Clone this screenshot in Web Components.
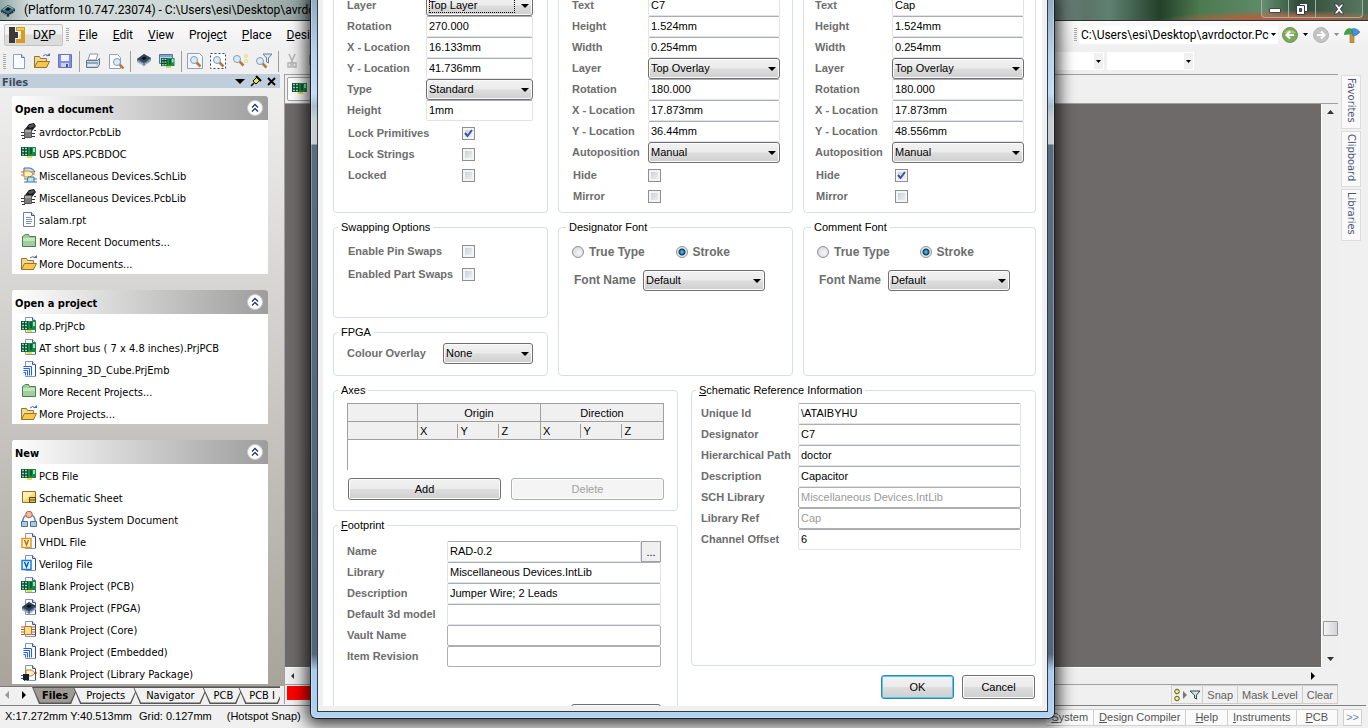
<!DOCTYPE html>
<html lang="en">
<head>
<meta charset="utf-8">
<title>DXP</title>
<style>
  body {
    margin: 0;
    background: #fff;
    overflow: hidden;
    font-family: "Liberation Sans", Arial, sans-serif;
    font-size: 11px;
    color: #000;
    --ui-font: Roboto, "Open Sans", sans-serif;
    --panel-font: "DejaVu Sans Condensed", "DejaVu Sans", sans-serif;
  }
</style>
</head>
<body>
<app-shell></app-shell>
<component-dialog></component-dialog>

<script>
const board = (x, y) => `
  <g transform="translate(${x} ${y})">
    <path d="M0 0h15v9h-4v2H6V9H0z" fill="#1a8a4c"/>
    <path d="M0 0h7v9H0z" fill="#0d4a33"/>
    <path d="M1 1.500h2M4 1.500h2M1 4.500h2M4 4.500h2M1 7.500h2M4 7.500h2" stroke="#8fe0b0" stroke-width="1.500"/>
    <path d="M9 1h2v6H9z" fill="#0d5a36"/>
    <path d="M12 1h2v4h-2z" fill="#9fe6b4"/>
    <path d="M6 9h5v2H6z" fill="#e6e03a"/>
  </g>`;
const page = '<path d="M4.500 .500h7l3 3v12h-10z" fill="#f6f9ff" stroke="#8795b5"/><path d="M11.500 .500v3h3" fill="#cdd8f0" stroke="#465a85"/><path d="M14.500 4v11" stroke="#33507a"/>';
const lens = (x, y) => `
  <g transform="translate(${x} ${y})">
    <path d="M6.500 6.500l4 4" stroke="#b5793c" stroke-width="2.5"/>
    <circle cx="4" cy="4" r="3.500" fill="#dbeaf8" stroke="#8698ae"/>
  </g>`;
const chip = (a, b) => `
  <path d="M1 8l7-5 7 4v3l-7 5-7-4z" fill="${b}"/>
  <path d="M1 8l7-5 7 4-7 5z" fill="${a}"/>
  <path d="M5 7.500l3-2 3 1.500-3 2z" fill="#111"/>
  <path d="M2 10v2M4 11v2M6 12v2M10 12v2M12 11v2M14 9v2" stroke="#d5dbe3"/>`;

const ICONS = {
  app: chip('#3b6f7c', '#1c3038') + '<path d="M3 8l5-4 5 3" stroke="#79bfc0" fill="none"/>',
  dxp: '<path d="M0 0h6v5h3v6H6v5H0z" fill="#3c3a38"/><path d="M7 0h9v16H7v-4h5V4H7z" fill="#d99b1c"/><path d="M8 1h7v2H8z" fill="#f0c868"/><path d="M7 4.500h2.500v7H7" fill="none" stroke="#fff"/>',
  pcblib: '<path d="M4 6l4-5 5-1 2 3-4 5z" fill="#1c1c1c"/><path d="M7 3l5-2 2 2-5 2z" fill="#555"/><path d="M3.500 6.500h7v8h-7z" fill="#7d7d7d" stroke="#555"/><path d="M4 7h6v2H4z" fill="#a8a8a8"/><path d="M0 9.500h3M0 12.500h3M1 15.500h3M11 13.500h3M11 10.500h3M13 7.500h2" stroke="#333"/>',
  board: board(0, 2),
  schlib: '<path d="M3 1h6q4 1 5 4h-4v2H3z" fill="#cfe0fb" stroke="#3a66c8"/><path d="M3 4h5q3 1 4 3-1 3-4 3H3z" fill="#fff3b8" stroke="#d9860c"/><path d="M0 5h3M0 8h3M12 7h2" stroke="#d2691e"/><path d="M7 10h6v5H6z" fill="#bfe8dc" stroke="#3572b8"/><path d="M3 12h3M3 15h3M13 12h3M13 15h3" stroke="#3572b8"/>',
  rpt: '<path d="M2.500 1.500h8l3 3v11h-11z" fill="#fdfdff" stroke="#6f80a5"/><path d="M10.500 1.500v3h3" fill="#c7d4ec" stroke="#46597f"/><path d="M5 6.500h5M5 8.500h6M5 10.500h6M5 12.500h5" stroke="#7f90b0"/>',
  recent: '<path d="M1.500 3.500l3-2h3l1 2h6v10h-13z" fill="#9fcf9c" stroke="#4c7d4b"/><path d="M2 5h12v3H2z" fill="#c4e4c0"/>',
  folder: '<path d="M.500 3.500h5l1 2h6v9h-12z" fill="#f4d98a" stroke="#8d7440"/><path d="M3.500 8.500h12l-3 6h-12z" fill="#f7c64c" stroke="#9a7426"/><path d="M9 3q3-3 5 0" fill="none" stroke="#4b6da0"/><path d="M12 3h4V0z" fill="#4b6da0"/>',
  prjpcb: page + board(0, 4),
  prjemb: page + '<path d="M2 5h9v10H2z" fill="#eef4ff"/><path d="M2.500 5.500h8v9M2.500 7.500h6v7M2.500 9.500h4v5M2.500 11.500h2v3" fill="none" stroke="#2f62d6"/>',
  sheet: '<path d="M1.500 2.500h13v11h-13z" fill="#ffd968" stroke="#8d7338"/><path d="M2 3h12L2 12z" fill="#fff0b0"/><path d="M8.500 8.500h6v5h-6zM9 11h5" fill="#f4c138" stroke="#4a4637"/>',
  openbus: '<path d="M5 4q-4 3-3 8M11 4q4 3 3 8" fill="none" stroke="#5b7fa8" stroke-width="1.500"/><circle cx="8" cy="3.500" r="3.300" fill="#f2b99c" stroke="#a9674a"/><path d="M.500 10.500h6v5h-6zM9.500 10.500h6v5h-6z" fill="#a9cbe4" stroke="#4d7394"/>',
  vhdl: page + '<path d="M1 5.500h9v9H1z" fill="#fff6dd" stroke="#e39a16" stroke-width="1.500"/><path d="M3.500 7l2 5 2-5" fill="none" stroke="#c8690a" stroke-width="1.500"/>',
  verilog: page + '<path d="M1 5.500h9v9H1z" fill="#e9f3ff" stroke="#167fe3" stroke-width="1.500"/><path d="M3.500 7l2 5 2-5" fill="none" stroke="#0a5dc8" stroke-width="1.500"/>',
  fpga: page + chip('#2e4257', '#5d7691'),
  core: page + '<path d="M3.500 5.500h7v8h-7z" fill="#ffe08a" stroke="#b8742a"/><path d="M0 6h3M0 8.500h3M0 11h3M0 13.500h3M11 6h3M11 8.500h3M11 11h3M11 13.500h3" stroke="#c05a1e"/>',
  libpkg: page + '<path d="M5 5h5q3 1 4 3-1 2-4 3H5z" fill="#fff0c8" stroke="#c97a14"/><path d="M13 8h3" stroke="#c22"/><path d="M2 9h6v6H2z" fill="#14202e"/><path d="M0 10.500h2M0 13.500h2M3.500 15v1M6.500 15v1" stroke="#456"/>',
  new: '<path d="M2.500 1.500h8l3 3v11h-11z" fill="#fbfcff" stroke="#92a0bd"/><path d="M10.500 1.500v3h3" fill="#d6e0f2" stroke="#5f7196"/>',
  save: '<path d="M1.500 1.500h13v13h-13z" fill="#7f8fe0" stroke="#6474c4"/><path d="M4 2h8v6H4z" fill="#eef2ff"/><path d="M4 10h8v4H4z" fill="#c9d0f2"/><path d="M9 11h2v3H9z" fill="#4454a8"/>',
  print: '<path d="M5 1h8l-2 6H3z" fill="#fff" stroke="#8b97ad"/><path d="M1.500 7.500h11l2-2v6l-2 3h-11z" fill="#c8d2e0" stroke="#66748c"/><path d="M2 10h11" stroke="#66748c"/><path d="M3 12h8" stroke="#fff"/>',
  preview: '<path d="M1.500 1.500h8l3 3v11h-11z" fill="#fbfcff" stroke="#92a0bd"/>' + lens(5, 5),
  chip: '<g transform="translate(0 -2)">' + chip('#33485f', '#6f879f') + '</g>',
  boards: '<path d="M.500 1.500h13v9h-13z" fill="#b8d3ea" stroke="#54749a"/><path d="M1 2h12v2H1z" fill="#7fa3cc"/><g transform="translate(2 5) scale(.9)">' + board(0, 0) + '</g>',
  zoomdoc: '<path d="M.500 .500h12l3 3v12h-15z" fill="#f2f6fc" stroke="#8fa0ba"/>' + lens(3, 3),
  zoomarea: '<path d="M.500 .500h15v15H.500z" fill="#fff" stroke="#33466e" stroke-dasharray="2 2"/>' + lens(3, 3),
  zoomsel: lens(0, 2) + '<g fill="#fff7a0" stroke="#d8c860" stroke-width=".6"><circle cx="13" cy="3" r="1.500"/><circle cx="13" cy="8" r="1.500"/></g>',
  zoomfilter: lens(0, 4) + '<path d="M7 1h9l-3.500 4v5l-2-1V5z" fill="#dde7f2" stroke="#66809e"/>',
  cut: '<path d="M5 1l4 9M11 1L7 10" stroke="#b4b4b4" stroke-width="1.500"/><path d="M4 10h3v4H4zM9 10h3v4H9z" fill="none" stroke="#b4b4b4" stroke-width="1.500"/>',
  copy: '<path d="M2.500 2.500h7v9h-7zM6.500 5.500h7v9h-7z" fill="#eee" stroke="#aaa"/>',
  menu: '<path d="M3 6h10l-5 5z"/>',
  pin: '<path d="M3 13l3-3" stroke="#000" stroke-width="1.500"/><path d="M5 8l4-4 3 3-4 4z" fill="#f5e642" stroke="#000"/><path d="M8 3l5 5" stroke="#000" stroke-width="2"/>',
  close: '<path d="M4 5l7 7M11 5l-7 7" stroke="#000" stroke-width="1.800"/>',
  collapse: '<circle cx="8" cy="8" r="7.500" fill="#fff" stroke="#c8c8d0"/><path d="M5 7.500l3-3 3 3M5 11.500l3-3 3 3" fill="none" stroke="#26365e" stroke-width="1.300"/>',
  back: '<circle cx="8" cy="8" r="7.500" fill="#7ea85c" stroke="#6f9155"/><path d="M2 6q6-6 12 0" fill="#aac98e"/><path d="M12 8H5M8 4.500L4.500 8 8 11.500" fill="none" stroke="#fff" stroke-width="2"/>',
  forward: '<circle cx="8" cy="8" r="7.500" fill="#c4c4c4" stroke="#b4b4b4"/><path d="M4 8h7M8 4.500L11.500 8 8 11.500" fill="none" stroke="#fff" stroke-width="2"/>',
  sign: '<path d="M6 3h4v13H6z" fill="#c9973a" stroke="#86601c" stroke-width=".5"/><path d="M0 8q0-5 5-7l4 1v5z" fill="#43a047"/><path d="M8 2q4-2 8 3-3 4-7 4z" fill="#4a8fdc" stroke="#2c61a8" stroke-width=".5"/>',
  up: '<path d="M5 10h7L8.500 6z" fill="#333"/>',
  down: '<path d="M5 6h7l-3.500 4z" fill="#333"/>',
  left: '<path d="M9 5v6L6 8z" fill="#333"/>',
  lefts: '<path d="M9 4v8L5 8z" fill="#999"/>',
  right: '<path d="M6 4v8l4-4z" fill="#000"/>',
  dots: '<g fill="#f6ef3c" stroke="#555"><circle cx="4" cy="4.500" r="2.300"/><circle cx="4" cy="11.500" r="2.300"/></g><path d="M10 4v8l4-4z" fill="#777"/>',
  funnel: '<path d="M1 4h10L7.500 8v4L5.500 11V8z" fill="#d7e6e2" stroke="#2c4a48"/>',
  min: '<path d="M2.500 7.500h11v4h-11z" fill="#fff" stroke="#3d4a48"/>',
  max: '<path d="M5.500 2.500h8v8h-8z" fill="#fff" stroke="#333f48"/><path d="M2.500 4.500h8v9h-8z" fill="#fff" stroke="#333f48"/><path d="M5.500 7.500h2v3h-2z" fill="#567" stroke="#333f48"/>',
  x: '<path d="M3 3h3l2 2.500L10 3h3l-3.500 5 3.500 5h-3l-2-2.500L6 13H3l3.500-5z" fill="#fff" stroke="#333f48"/>'
};

class AppIcon extends HTMLElement {
  connectedCallback() {
    const root = this.attachShadow({ mode: 'open' });
    root.innerHTML = `
      <style>
        :host { display: block; width: 16px; height: 16px; flex: none; }
        svg { display: block; }
      </style>
      <svg width="16" height="16" viewBox="0 0 16 16" aria-hidden="true">${ICONS[this.getAttribute('name')] || ''}</svg>
    `;
  }
}
customElements.define('app-icon', AppIcon);

class TitleBar extends HTMLElement {
  connectedCallback() {
    this.attachShadow({ mode: 'open' }).innerHTML = `
      <style>
        :host {
          display: flex;
          align-items: center;
          height: 21px;
          border-bottom: 1px solid #2b3332;
          box-sizing: border-box;
          font: 12px/20px var(--ui-font);
          white-space: nowrap;
          background:
            radial-gradient(ellipse 130px 12px at 1285px 22px, #b0603f 0, #b0603f 40%, transparent 100%),
            linear-gradient(90deg, #95a8a6 0, #d3dcda 30px, #cfd8d7 200px, #a9b5b3 260px, #8fa09e 310px, #6f8580 1050px, #5c7468 1085px, #5f8070 1110px, #24402a 1160px, #4d7a50 1200px, #5d8a68 1260px, #1f3c27 1300px, #4c6f55 1368px);
        }
        app-icon { margin: 0 8px 0 0; }
        .controls {
          display: flex;
          align-self: flex-start;
          margin: 0 5px 0 auto;
          border: 1px solid #9fb0a8;
          border-top: 0;
          border-radius: 0 0 4px 4px;
        }
        button {
          display: flex;
          justify-content: center;
          align-items: center;
          width: 27px;
          height: 17px;
          padding: 0;
          border: 0;
          border-right: 1px solid #9fb0a8;
          background: rgba(255, 255, 255, .08);
        }
        button:last-child { width: 46px; border-right: 0; }
        button app-icon { margin: 0; }
      </style>
      <app-icon name="app"></app-icon>
      <span>(Platform 10.747.23074) - C:\\Users\\esi\\Desktop\\avrdo</span>
      <div class="controls">
        <button aria-label="Minimize"><app-icon name="min"></app-icon></button>
        <button aria-label="Restore"><app-icon name="max"></app-icon></button>
        <button aria-label="Close"><app-icon name="x"></app-icon></button>
      </div>
    `;
  }
}
customElements.define('title-bar', TitleBar);

class MenuBar extends HTMLElement {
  connectedCallback() {
    this.attachShadow({ mode: 'open' }).innerHTML = `
      <style>
        :host {
          display: flex;
          align-items: center;
          height: 27px;
          padding: 0 8px 0 4px;
          background: linear-gradient(#fafafa, #f0f0f0);
          font: 12px/16px var(--ui-font);
        }
        button { padding: 0; border: 0; background: none; font: inherit; color: inherit; }
        .dxp {
          display: flex;
          align-items: center;
          gap: 8px;
          height: 22px;
          padding: 0 6px 0 4px;
          border: 1px solid #c4c4c4;
          border-radius: 2px;
          background: linear-gradient(#f2f2f2 45%, #dcdcdc 50%);
        }
        .grip {
          width: 3px;
          height: 14px;
          background: repeating-linear-gradient(#a8a8a8 0 1px, #f4f4f4 1px 2px);
        }
        .dxp + .grip { margin: 0 10px 0 3px; }
        nav { display: flex; flex: 1; gap: 15px; }
        .address {
          display: flex;
          align-items: center;
          width: 199px;
          height: 18px;
          margin: 0 4px 0 2px;
          background: #fff;
        }
        input {
          flex: 1;
          min-width: 0;
          padding: 0 0 0 2px;
          border: 0;
          background: none;
          font: inherit;
        }
        .drop svg { display: block; }
        .drop { width: 15px; display: flex; justify-content: center; }
        .address .drop { width: 9px; }
      </style>
      <button class="dxp"><app-icon name="dxp"></app-icon><span>D<u>X</u>P</span></button>
      <span class="grip"></span>
      <nav>
        <button><u>F</u>ile</button>
        <button><u>E</u>dit</button>
        <button><u>V</u>iew</button>
        <button>Proje<u>c</u>t</button>
        <button><u>P</u>lace</button>
        <button><u>D</u>esi</button>
      </nav>
      <span class="grip"></span>
      <div class="address">
        <input aria-label="Document path" value="C:\\Users\\esi\\Desktop\\avrdoctor.Pc">
        <span class="drop"><svg width="5" height="3"><path d="M0 0h5L2.500 3z"/></svg></span>
      </div>
      <button aria-label="Back"><app-icon name="back"></app-icon></button>
      <span class="drop"><svg width="5" height="3"><path d="M0 0h5L2.500 3z"/></svg></span>
      <button aria-label="Forward"><app-icon name="forward"></app-icon></button>
      <span class="drop"><svg width="5" height="3"><path d="M0 0h5L2.500 3z" fill="#888"/></svg></span>
      <button aria-label="Home"><app-icon name="sign"></app-icon></button>
    `;
  }
}
customElements.define('menu-bar', MenuBar);

class ToolBar extends HTMLElement {
  connectedCallback() {
    const groups = [
      ['new', 'folder', 'save'],
      ['print', 'preview'],
      ['chip', 'boards'],
      ['zoomdoc', 'zoomarea', 'zoomsel', 'zoomfilter'],
      ['cut', 'copy']
    ];
    const html = groups.map(names => `
      <div class="group">${names.map(n => `<button aria-label="${n}"><app-icon name="${n}"></app-icon></button>`).join('')}</div>
    `).join('<hr>');
    this.attachShadow({ mode: 'open' }).innerHTML = `
      <style>
        :host {
          display: flex;
          align-items: center;
          height: 26px;
          padding: 0 174px 0 3px;
          background: #f0f0f0;
        }
        .grip {
          width: 3px;
          height: 15px;
          margin-right: 5px;
          background: repeating-linear-gradient(#a8a8a8 0 1px, #f4f4f4 1px 2px);
        }
        .group { display: flex; gap: 7px; }
        button { padding: 0; border: 0; background: none; }
        hr { width: 1px; height: 21px; margin: 0 5px 0 6px; border: 0; background: #a0a0a0; }
        .combo {
          display: flex;
          align-items: center;
          justify-content: flex-end;
          width: 87px;
          height: 18px;
          margin-left: 3px;
          background: #fff;
        }
        .space { flex: 1; }
        .combo span {
          display: flex;
          align-items: center;
          justify-content: center;
          width: 9px;
          height: 16px;
          margin-right: 1px;
          background: #f0f0f0;
        }
      </style>
      <span class="grip"></span>
      ${html}
      <div class="space"></div>
      <div class="combo"><span><svg width="5" height="3"><path d="M0 0h5L2.500 3z"/></svg></span></div>
      <div class="combo"><span><svg width="5" height="3"><path d="M0 0h5L2.500 3z"/></svg></span></div>
    `;
  }
}
customElements.define('tool-bar', ToolBar);

class TaskCard extends HTMLElement {
  connectedCallback() {
    this.attachShadow({ mode: 'open' }).innerHTML = `
      <style>
        :host { display: block; background: #fff; border-radius: 3px 3px 0 0; overflow: hidden; flex: none; }
        header {
          display: flex;
          align-items: center;
          justify-content: space-between;
          height: 24px;
          padding: 0 5px 0 3px;
          background: linear-gradient(90deg, #fff, #9d9d9d);
        }
        h2 { margin: 0; padding-top: 3px; font: bold 11px/14px var(--panel-font); }
        button { padding: 0; border: 0; background: none; }
      </style>
      <header>
        <h2>${this.getAttribute('heading')}</h2>
        <button aria-label="Collapse"><app-icon name="collapse"></app-icon></button>
      </header>
      <slot></slot>
    `;
  }
}
customElements.define('task-card', TaskCard);

class TaskLink extends HTMLElement {
  connectedCallback() {
    this.attachShadow({ mode: 'open' }).innerHTML = `
      <style>
        :host { display: block; font: 11px/14px var(--panel-font); white-space: nowrap; }
        a { display: flex; align-items: center; gap: 2px; height: 22px; padding-left: 9px; color: #000; text-decoration: none; }
        span { padding-top: 3px; }
      </style>
      <a href="#"><app-icon name="${this.getAttribute('icon')}"></app-icon><span><slot></slot></span></a>
    `;
  }
}
customElements.define('task-link', TaskLink);

class FilesPanel extends HTMLElement {
  connectedCallback() {
    this.attachShadow({ mode: 'open' }).innerHTML = `
      <style>
        :host { display: flex; flex-direction: column; width: 284px; flex: none; min-height: 0; }
        header {
          display: flex;
          align-items: center;
          height: 14px;
          margin-right: 4px;
          padding: 0 0 0 2px;
          background: #c0cddb;
          color: #3b4a5c;
        }
        header h1 { flex: 1; margin: 0; padding-top: 3px; font: bold 11px/14px var(--panel-font); }
        header button { padding: 0; border: 0; background: none; height: 16px; }
        .list {
          display: flex;
          flex: 1;
          flex-direction: column;
          gap: 16px;
          min-height: 0;
          padding: 8px 16px 0 12px;
          overflow: hidden;
          background: linear-gradient(#efefef, #d6d4d1 35%, #a8a49b);
        }
        .tabs {
          display: flex;
          height: 17px;
          margin-right: 4px;
          overflow: hidden;
          font: 11px/15px var(--panel-font);
          border-top: 1px solid #777;
        }
        .tab {
          margin-left: -5px;
          flex: none;
          padding: 0 0 1px;
          border: 0;
          background: #555;
          clip-path: polygon(0 0, 100% 0, calc(100% - 7px) 100%, 7px 100%);
          font: inherit;
        }
        .tab span {
          display: block;
          padding: 0 13px;
          background: #f2f2f2;
          clip-path: polygon(1px 0, calc(100% - 1px) 0, calc(100% - 8px) 100%, 8px 100%);
        }
        .tab.on { margin-left: 0; font-weight: bold; }
        .tab.on span { padding: 0 10px; background: #9f9a93; }
        .tab.slim span { padding: 0 10px 0 11px; }
      </style>
      <header>
        <h1>Files</h1>
        <button aria-label="Menu"><app-icon name="menu"></app-icon></button>
        <button aria-label="Pin"><app-icon name="pin"></app-icon></button>
        <button aria-label="Close"><app-icon name="close"></app-icon></button>
      </header>
      <div class="list">
        <task-card heading="Open a document">
          <task-link icon="pcblib">avrdoctor.PcbLib</task-link>
          <task-link icon="board">USB APS.PCBDOC</task-link>
          <task-link icon="schlib">Miscellaneous Devices.SchLib</task-link>
          <task-link icon="pcblib">Miscellaneous Devices.PcbLib</task-link>
          <task-link icon="rpt">salam.rpt</task-link>
          <task-link icon="recent">More Recent Documents...</task-link>
          <task-link icon="folder">More Documents...</task-link>
        </task-card>
        <task-card heading="Open a project">
          <task-link icon="prjpcb">dp.PrjPcb</task-link>
          <task-link icon="prjpcb">AT short bus ( 7 x 4.8 inches).PrjPCB</task-link>
          <task-link icon="prjemb">Spinning_3D_Cube.PrjEmb</task-link>
          <task-link icon="recent">More Recent Projects...</task-link>
          <task-link icon="folder">More Projects...</task-link>
        </task-card>
        <task-card heading="New">
          <task-link icon="board">PCB File</task-link>
          <task-link icon="sheet">Schematic Sheet</task-link>
          <task-link icon="openbus">OpenBus System Document</task-link>
          <task-link icon="vhdl">VHDL File</task-link>
          <task-link icon="verilog">Verilog File</task-link>
          <task-link icon="prjpcb">Blank Project (PCB)</task-link>
          <task-link icon="fpga">Blank Project (FPGA)</task-link>
          <task-link icon="core">Blank Project (Core)</task-link>
          <task-link icon="prjemb">Blank Project (Embedded)</task-link>
          <task-link icon="libpkg">Blank Project (Library Package)</task-link>
        </task-card>
      </div>
      <div class="tabs">
        <app-icon name="lefts"></app-icon>
        <app-icon name="right"></app-icon>
        <button class="tab on"><span>Files</span></button>
        <button class="tab"><span>Projects</span></button>
        <button class="tab"><span>Navigator</span></button>
        <button class="tab slim"><span>PCB</span></button>
        <button class="tab slim"><span>PCB I</span></button>
      </div>
    `;
  }
}
customElements.define('files-panel', FilesPanel);

class PcbEditor extends HTMLElement {
  connectedCallback() {
    this.attachShadow({ mode: 'open' }).innerHTML = `
      <style>
        :host {
          display: flex;
          flex: 1;
          flex-direction: column;
          min-width: 0;
          border-top: 1px solid #a0a0a0;
          border-left: 1px solid #a0a0a0;
          box-sizing: border-box;
        }
        .docs { height: 28px; padding-left: 2px; border-bottom: 1px solid #a0a0a0; }
        .doc {
          display: flex;
          align-items: center;
          width: 120px;
          height: 22px;
          margin-top: 2px;
          padding: 0 4px;
          border: 1px solid #a0a0a0;
          border-radius: 2px;
          background: #fff;
        }
        .view { display: grid; flex: 1; grid-template: 1fr 17px / 1fr 17px; min-height: 0; }
        .canvas { background: #6e6a69; }
        .v, .h { display: flex; justify-content: space-between; align-items: center; background: #efefef; }
        .v { flex-direction: column; border-left: 1px solid #fff; }
        .h { border-top: 1px solid #fff; }
        .thumb {
          width: 13px;
          height: 13px;
          margin: auto 0 15px;
          border: 1px solid #989898;
          border-radius: 1px;
          background: linear-gradient(90deg, #f4f4f4, #d4d4d8);
        }
        .layers { display: flex; height: 19px; padding-left: 2px; border-top: 1px solid #a0a0a0; }
        .layer { width: 60px; height: 14px; margin-top: 1px; background: #f00; }
        .space { flex: 1; }
        button {
          display: flex;
          align-items: center;
          padding: 0 4px;
          border: 1px solid #d0cccc;
          border-left-width: 0;
          background: #f0f0f0;
          font: inherit;
          color: #606060;
        }
        .icons { border-left-width: 1px; padding: 0 1px; }
        .icons app-icon:last-child { width: 12px; overflow: hidden; }
      </style>
      <div class="docs"><div class="doc"><app-icon name="board"></app-icon></div></div>
      <div class="view">
        <div class="canvas"></div>
        <div class="v"><app-icon name="up"></app-icon><div class="thumb"></div><app-icon name="down"></app-icon></div>
        <div class="h"><app-icon name="left"></app-icon><app-icon name="right"></app-icon></div>
      </div>
      <div class="layers">
        <div class="layer"></div>
        <div class="space"></div>
        <button class="icons" aria-label="Filter"><app-icon name="dots"></app-icon><app-icon name="funnel"></app-icon></button>
        <button>Snap</button>
        <button>Mask Level</button>
        <button>Clear</button>
      </div>
    `;
  }
}
customElements.define('pcb-editor', PcbEditor);

class SideTabs extends HTMLElement {
  connectedCallback() {
    this.attachShadow({ mode: 'open' }).innerHTML = `
      <style>
        :host { display: flex; flex-direction: column; gap: 2px; width: 20px; padding: 1px 5px 0 3px; margin-right: 2px; }
        button {
          writing-mode: vertical-rl;
          padding: 2px 2px 5px;
          border: 1px solid #dcdcdc;
          background: #fafafa;
          color: #4c5478;
          font: 11px/14px var(--panel-font);
        }
      </style>
      <button>Favorites</button>
      <button>Clipboard</button>
      <button>Libraries</button>
    `;
  }
}
customElements.define('side-tabs', SideTabs);

class StatusBar extends HTMLElement {
  connectedCallback() {
    this.attachShadow({ mode: 'open' }).innerHTML = `
      <style>
        :host {
          display: flex;
          align-items: center;
          height: 23px;
          padding: 0 4px 0 5px;
          margin-right: 2px;
          border-top: 1px solid #808080;
          box-sizing: border-box;
          background: #f0f0f0;
          line-height: 14px;
          white-space: nowrap;
        }
        span { margin-right: 7px; padding-bottom: 2px; }
        .hot { flex: 1; margin-left: 8px; }
        button {
          height: 17px;
          padding: 0 5px;
          border: 1px solid #d0d0d0;
          border-left-width: 0;
          background: #fafafa;
          color: #555;
          font: inherit;
        }
        .wide { padding: 0 9px; }
        .more { margin-left: 5px; padding: 0 2px; border-left-width: 1px; color: #7088a8; }
      </style>
      <span>X:17.272mm Y:40.513mm</span>
      <span>Grid: 0.127mm</span>
      <span class="hot">(Hotspot Snap)</span>
      <button><u>S</u>ystem</button>
      <button><u>D</u>esign Compiler</button>
      <button class="wide"><u>H</u>elp</button>
      <button><u>I</u>nstruments</button>
      <button class="wide"><u>P</u>CB</button>
      <button class="more">&gt;&gt;</button>
    `;
  }
}
customElements.define('status-bar', StatusBar);

class AppShell extends HTMLElement {
  connectedCallback() {
    this.attachShadow({ mode: 'open' }).innerHTML = `
      <style>
        :host { display: flex; flex-direction: column; height: 100vh; background: #f0f0f0; }
        main { display: flex; flex: 1; min-height: 0; border-bottom: 1px solid #f0f0f0; }
      </style>
      <title-bar></title-bar>
      <menu-bar></menu-bar>
      <tool-bar></tool-bar>
      <main>
        <files-panel></files-panel>
        <pcb-editor></pcb-editor>
        <side-tabs></side-tabs>
      </main>
      <status-bar></status-bar>
    `;
  }
}
customElements.define('app-shell', AppShell);

class PushButton extends HTMLElement {
  connectedCallback() {
    const disabled = this.hasAttribute('disabled') ? 'disabled' : '';
    this.attachShadow({ mode: 'open' }).innerHTML = `
      <style>
        :host { display: block; }
        button {
          width: 100%;
          height: 22px;
          padding: 0;
          border: 1px solid #707070;
          border-radius: 3px;
          box-shadow: inset 0 0 0 1px #fcfcfc;
          background: linear-gradient(#f2f2f2, #ebebeb 48%, #dddddd 52%, #cfcfcf);
          color: #000;
          font: inherit;
        }
        button:disabled { border-color: #adb2b5; background: #f4f4f4; color: #a0a0a0; }
        :host([tall]) button { height: 24px; }
        :host([default]) button { border-color: #3c7fb1; box-shadow: inset 0 0 0 1px #46d0f5; }
      </style>
      <button ${disabled}><slot></slot></button>
    `;
  }
}
customElements.define('push-button', PushButton);

/* One labelled control: text box, drop-down or tick box */
class FormField extends HTMLElement {
  connectedCallback() {
    const type = this.getAttribute('type') || 'text';
    const value = this.getAttribute('value') || '';
    const flag = name => this.hasAttribute(name) ? name : '';
    let control = `<input id="control" type="text" value="${value}" ${flag('disabled')}>`;
    if (type === 'select') {
      control = `
        <select id="control"><option>${value}</option></select>
        <svg width="8" height="4"><path d="M0 0h8L4 4z"/></svg>
      `;
    } else if (type === 'check') {
      control = `<input id="control" type="checkbox" ${flag('checked')}>
        <svg class="mark" width="9" height="9"><path d="M1 4l2.500 3L8 1" fill="none" stroke="#3b55a0" stroke-width="2"/></svg>`;
    }
    this.attachShadow({ mode: 'open' }).innerHTML = `
      <style>
        :host { display: flex; align-items: center; height: 21px; }
        label {
          flex: none;
          width: var(--label-width, 76px);
          padding-bottom: 2px;
          color: #6d6d6d;
          font-size: var(--label-size, 11px);
          font-weight: bold;
          line-height: 14px;
          white-space: nowrap;
        }
        .control { display: grid; flex: 1; align-items: center; min-width: 0; }
        .control > * { grid-area: 1 / 1; }
        .control svg { justify-self: end; margin-right: 4px; pointer-events: none; }
        input[type=text], select {
          width: 100%;
          min-width: 0;
          height: 21px;
          margin: 0;
          padding: 0 2px 2px;
          box-sizing: border-box;
          border: 1px solid #e0e3ea;
          border-top-color: #abadb3;
          border-radius: 2px;
          background: #fff;
          color: #000;
          font: inherit;
        }
        input[type=text]:disabled { border-color: #afafaf; color: #9a9a9a; }
        select {
          appearance: none;
          border-color: #707070;
          border-radius: 3px;
          box-shadow: inset 0 0 0 1px #fafafa;
          background: linear-gradient(#f2f2f2, #ebebeb 48%, #dddddd 52%, #cfcfcf);
        }
        input[type=checkbox] {
          appearance: none;
          width: 13px;
          height: 13px;
          margin: 0;
          border: 1px solid #8e8f8f;
          box-shadow: inset 0 0 0 2px #f4f4f4;
          background: linear-gradient(135deg, #c4c9d0, #f6f6f6);
        }
        .control .mark { justify-self: start; margin: 0 0 0 2px; visibility: hidden; }
        input:checked + .mark { visibility: visible; }
        .focus {
          align-self: stretch;
          margin: 3px 18px 3px 3px;
          border: 1px dotted #000;
          pointer-events: none;
        }
      </style>
      <label for="control">${this.getAttribute('label')}</label>
      <div class="control">${control}${this.hasAttribute('focused') ? '<div class="focus"></div>' : ''}</div>
      <slot></slot>
    `;
  }
}
customElements.define('form-field', FormField);

class GroupBox extends HTMLElement {
  connectedCallback() {
    const heading = this.getAttribute('heading');
    const key = this.hasAttribute('key');
    const text = heading && key ? `<u>${heading[0]}</u>${heading.slice(1)}` : heading;
    this.attachShadow({ mode: 'open' }).innerHTML = `
      <style>
        :host { display: grid; min-width: 0; }
        fieldset {
          min-width: 0;
          margin: 0;
          padding: var(--group-padding, 6px 14px 10px 13px);
          border: 1px solid #d5dfe5;
          border-radius: 4px;
        }
        legend { margin-left: var(--legend-indent, -9px); padding: 0 3px; line-height: 14px; }
      </style>
      <fieldset>${heading ? `<legend>${text}</legend>` : ''}<slot></slot></fieldset>
    `;
  }
}
customElements.define('group-box', GroupBox);

class FontChoice extends HTMLElement {
  connectedCallback() {
    this.attachShadow({ mode: 'open' }).innerHTML = `
      <style>
        :host { display: block; }
        .kinds { display: flex; align-items: center; height: 21px; margin-bottom: 8px; color: #6d6d6d; font-size: 12px; font-weight: bold; }
        label { display: flex; align-items: center; gap: 5px; width: 104px; white-space: nowrap; }
        input {
          appearance: none;
          width: 12px;
          height: 12px;
          margin: 0;
          border: 1px solid #8e8f8f;
          border-radius: 50%;
          background: radial-gradient(circle at 60% 60%, #f6f6f6, #cfd2d6);
        }
        input:checked { background: radial-gradient(circle, #7fd0f4 0, #1b6fa8 2px, #12405f 3px, #e6eaee 4px); }
        form-field { --label-width: 69px; --label-size: 12px; width: 191px; margin-left: 2px; }
      </style>
      <div class="kinds">
        <label><input type="radio" name="kind">True Type</label>
        <label><input type="radio" name="kind" checked>Stroke</label>
      </div>
      <form-field label="Font Name" type="select" value="Default"></form-field>
    `;
  }
}
customElements.define('font-choice', FontChoice);

class AxesTable extends HTMLElement {
  connectedCallback() {
    this.attachShadow({ mode: 'open' }).innerHTML = `
      <style>
        :host { display: block; height: 67px; border-left: 1px solid #a0a0a0; margin-bottom: 8px; }
        table { width: 100%; border-collapse: collapse; table-layout: fixed; }
        th {
          height: 17px;
          padding: 0;
          border: 1px solid #a0a0a0;
          border-left-width: 0;
          background: #f0f0f0;
          font-weight: normal;
          line-height: 14px;
        }
        .sub th { padding-left: 2px; border-right: 0; text-align: left; }
        .sub span { display: block; }
        .sub th:not(.edge) span { border-right: 1px solid #a0a0a0; }
        .sub .edge { border-right: 1px solid #a0a0a0; }
      </style>
      <table>
        <colgroup><col style="width: 22%"><col span="6" style="width: 13%"></colgroup>
        <thead>
          <tr><th></th><th colspan="3">Origin</th><th colspan="3">Direction</th></tr>
          <tr class="sub">
            <th class="edge"></th>
            <th><span>X</span></th><th><span>Y</span></th><th class="edge"><span>Z</span></th>
            <th><span>X</span></th><th><span>Y</span></th><th class="edge"><span>Z</span></th>
          </tr>
        </thead>
      </table>
    `;
  }
}
customElements.define('axes-table', AxesTable);

class ComponentDialog extends HTMLElement {
  connectedCallback() {
    this.attachShadow({ mode: 'open' }).innerHTML = `
      <style>
        /* The window hangs over the top edge of the desktop */
        :host {
          position: fixed;
          top: -6px;
          right: 313px;
          bottom: 9px;
          left: 310px;
          display: flex;
          box-sizing: border-box;
          padding: 0 6px 6px;
          border: 1px solid #15202b;
          border-top: 0;
          border-radius: 0 0 6px 6px;
          background:
            linear-gradient(#8fa9c0 0, #b9d1ea 60px, #c4dcf5 100px, #a9bccb 112px, #c9ced2 125px, #c9ced2 150px, #5d6d7e 151px, #55657a 660px, #a9cbec 676px, #b4d2f0 100%);
          box-shadow: 0 0 0 1px rgba(255, 255, 255, .3) inset, 0 2px 16px 4px rgba(0, 0, 0, .75);
        }
        .frame {
          display: flex;
          flex: 1;
          min-width: 0;
          min-height: 0;
          padding: 0 5px 5px;
          border: 1px solid #2f3c49;
          border-top: 0;
          background: #f0f0f0;
        }
        .body {
          display: flex;
          flex: 1;
          flex-direction: column;
          gap: 7px;
          min-width: 0;
          padding: 0 6px 0 10px;
          overflow: hidden;
          background: #fff;
        }
        .row { display: grid; grid-template-columns: 215fr 235fr 233fr; gap: 10px; }
        .top { --group-padding: 0 12px 5px 13px; }
        .top group-box:nth-child(1) { --label-width: 79px; --group-padding: 0 14px 5px 13px; }
        .top group-box:nth-child(3) { --label-width: 77px; --group-padding: 0 11px 5px 11px; }
        .checks { margin: 2px 0 0 1px; --label-width: 75px; }
        .locks { --label-width: 114px; }
        .shown { --label-width: 79px; }
        .stack { display: flex; flex-direction: column; gap: 7px; min-width: 0; min-height: 0; }
        .swap { --label-width: 114px; --group-padding: 6px 14px 31px 14px; --legend-indent: -10px; }
        .swap form-field { height: 23px; }
        .fpga { --label-width: 96px; --group-padding: 4px 14px 11px 13px; }
        .font { --group-padding: 7px 13px 10px 13px; --legend-indent: -6px; }
        .bottom { flex: 1; grid-template: minmax(0, 1fr) / 1fr 1fr; gap: 13px; min-height: 0; }
        .pair { display: flex; gap: 10px; margin-left: 1px; }
        .pair push-button { flex: 1; }
        .axes { --group-padding: 6px 13px 10px 13px; }
        .footprint { --label-width: 100px; --group-padding: 9px 16px 10px 13px; }
        .browse {
          width: 20px;
          height: 21px;
          padding: 0;
          border: 1px solid #a0a0a0;
          background: #f0f0f0;
          font: inherit;
        }
        .footprint push-button { width: 90px; margin: 37px 0 0 auto; }
        .schematic { flex: 1; --label-width: 97px; --group-padding: 6px 14px 10px 9px; --legend-indent: -5px; }
        .actions { display: flex; justify-content: flex-end; gap: 8px; padding: 2px 1px 7px; }
        .actions push-button { width: 73px; }
      </style>
      <div class="frame">
        <div class="body">
          <div class="row top">
            <group-box>
              <form-field label="Layer" type="select" value="Top Layer" focused></form-field>
              <form-field label="Rotation" value="270.000"></form-field>
              <form-field label="X - Location" value="16.133mm"></form-field>
              <form-field label="Y - Location" value="41.736mm"></form-field>
              <form-field label="Type" type="select" value="Standard"></form-field>
              <form-field label="Height" value="1mm"></form-field>
              <div class="checks locks">
                <form-field label="Lock Primitives" type="check" checked></form-field>
                <form-field label="Lock Strings" type="check"></form-field>
                <form-field label="Locked" type="check"></form-field>
              </div>
            </group-box>
            <group-box>
              <form-field label="Text" value="C7"></form-field>
              <form-field label="Height" value="1.524mm"></form-field>
              <form-field label="Width" value="0.254mm"></form-field>
              <form-field label="Layer" type="select" value="Top Overlay"></form-field>
              <form-field label="Rotation" value="180.000"></form-field>
              <form-field label="X - Location" value="17.873mm"></form-field>
              <form-field label="Y - Location" value="36.44mm"></form-field>
              <form-field label="Autoposition" type="select" value="Manual"></form-field>
              <div class="checks">
                <form-field label="Hide" type="check"></form-field>
                <form-field label="Mirror" type="check"></form-field>
              </div>
            </group-box>
            <group-box>
              <form-field label="Text" value="Cap"></form-field>
              <form-field label="Height" value="1.524mm"></form-field>
              <form-field label="Width" value="0.254mm"></form-field>
              <form-field label="Layer" type="select" value="Top Overlay"></form-field>
              <form-field label="Rotation" value="180.000"></form-field>
              <form-field label="X - Location" value="17.873mm"></form-field>
              <form-field label="Y - Location" value="48.556mm"></form-field>
              <form-field label="Autoposition" type="select" value="Manual"></form-field>
              <div class="checks shown">
                <form-field label="Hide" type="check" checked></form-field>
                <form-field label="Mirror" type="check"></form-field>
              </div>
            </group-box>
          </div>
          <div class="row">
            <div class="stack">
              <group-box class="swap" heading="Swapping Options">
                <form-field label="Enable Pin Swaps" type="check"></form-field>
                <form-field label="Enabled Part Swaps" type="check"></form-field>
              </group-box>
              <group-box class="fpga" heading="FPGA">
                <form-field label="Colour Overlay" type="select" value="None"></form-field>
              </group-box>
            </div>
            <group-box class="font" heading="Designator Font"><font-choice></font-choice></group-box>
            <group-box class="font" heading="Comment Font"><font-choice></font-choice></group-box>
          </div>
          <div class="row bottom">
            <div class="stack">
              <group-box class="axes" heading="Axes">
                <axes-table></axes-table>
                <div class="pair">
                  <push-button>Add</push-button>
                  <push-button disabled>Delete</push-button>
                </div>
              </group-box>
              <group-box class="footprint" heading="Footprint" key>
                <form-field label="Name" value="RAD-0.2"><button class="browse">...</button></form-field>
                <form-field label="Library" value="Miscellaneous Devices.IntLib"></form-field>
                <form-field label="Description" value="Jumper Wire; 2 Leads"></form-field>
                <form-field label="Default 3d model"></form-field>
                <form-field label="Vault Name" disabled></form-field>
                <form-field label="Item Revision" disabled></form-field>
                <push-button></push-button>
              </group-box>
            </div>
            <div class="stack">
              <group-box class="schematic" heading="Schematic Reference Information" key>
                <form-field label="Unique Id" value="\\ATAIBYHU"></form-field>
                <form-field label="Designator" value="C7"></form-field>
                <form-field label="Hierarchical Path" value="doctor"></form-field>
                <form-field label="Description" value="Capacitor"></form-field>
                <form-field label="SCH Library" value="Miscellaneous Devices.IntLib" disabled></form-field>
                <form-field label="Library Ref" value="Cap" disabled></form-field>
                <form-field label="Channel Offset" value="6"></form-field>
              </group-box>
              <div class="actions">
                <push-button tall default>OK</push-button>
                <push-button tall>Cancel</push-button>
              </div>
            </div>
          </div>
        </div>
      </div>
    `;
  }
}
customElements.define('component-dialog', ComponentDialog);
</script>
</body>
</html>
